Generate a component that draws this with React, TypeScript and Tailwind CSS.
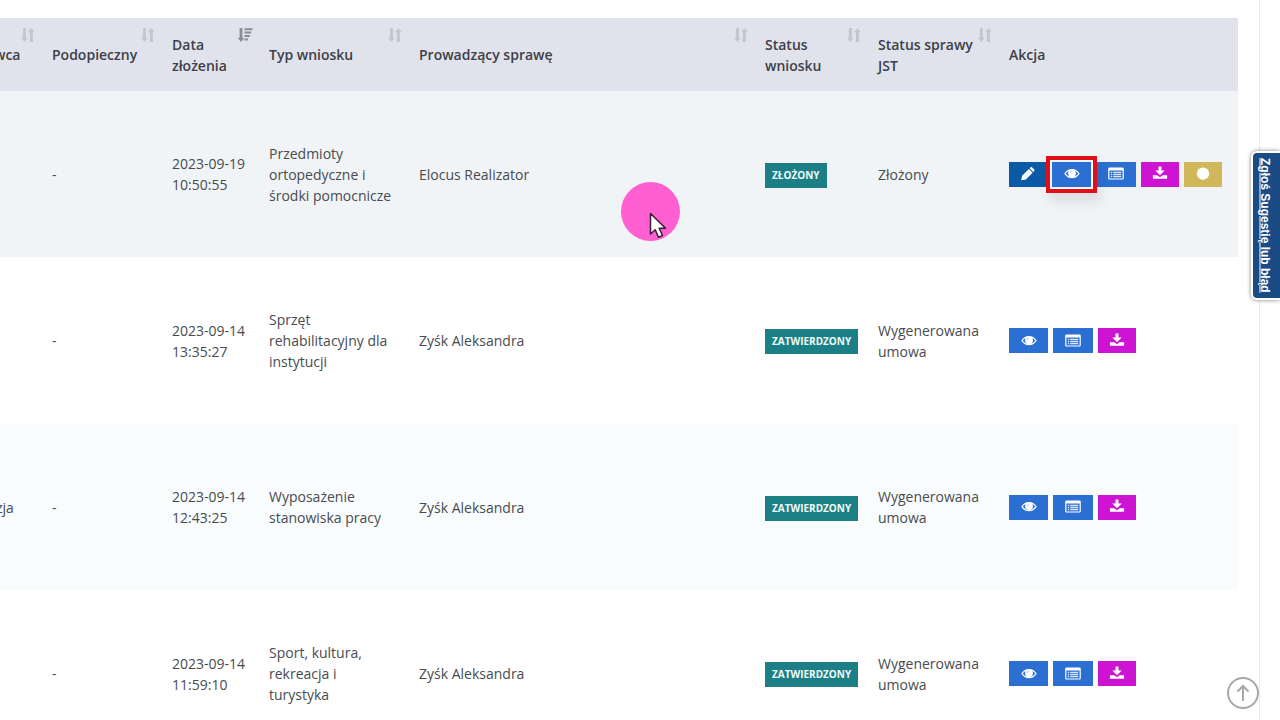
import type { ReactNode } from "react";

const ICON = "block h-4 w-4";

function PencilIcon() {
  return (
    <svg viewBox="0 0 16 16" className={ICON} fill="#fff" aria-hidden="true">
      <path d="M1.200 14.200l.9-4.400 6.800-6.800 3.700 3.700-6.800 6.800zM9.600 2.300l.9-.9c.5-.5 1.200-.5 1.700 0l1.900 1.900c.5.5.5 1.200 0 1.700l-.9.9z" />
      <path d="M4.600 11l5-5" stroke="#b5cde6" strokeWidth=".6" fill="none" />
    </svg>
  );
}

function EyeIcon() {
  return (
    <svg viewBox="0 0 16 16" className={ICON} aria-hidden="true">
      <path d="M1 7.700c1.700-2.600 4.200-4 7-4s5.300 1.400 7 4c-1.700 2.600-4.200 4-7 4s-5.300-1.400-7-4z" fill="none" stroke="#fff" strokeWidth="1.200" strokeLinejoin="round" />
      <circle cx="8" cy="7.200" r="3.900" fill="#fff" />
      <path d="M6.200 6.600c.1-.9.700-1.500 1.600-1.600" fill="none" stroke="#8fb4ea" strokeWidth=".8" strokeLinecap="round" />
    </svg>
  );
}

function ListIcon() {
  return (
    <svg viewBox="0 0 16 16" className={ICON} aria-hidden="true">
      <rect x=".8" y="2" width="14.400" height="11" rx=".8" fill="none" stroke="#fff" strokeWidth="1.200" />
      <path d="M1 2h14v2.500H1z" fill="#fff" />
      <path d="M2.800 6.300h1.400M2.800 8.500h1.400M2.800 10.700h1.400M5.200 6.300h8M5.200 8.500h8M5.200 10.700h8" stroke="#dce8f9" strokeWidth="1.300" />
    </svg>
  );
}

function DownloadIcon() {
  return (
    <svg viewBox="0 0 16 16" className={ICON} fill="#fff" aria-hidden="true">
      <path d="M6.500 .5h3v4h3.200L8 9.200 3.300 4.500h3.200z" />
      <path d="M.9 9.200h4.300L8 11.200l2.800-2h4.300v3.600H.9z" />
    </svg>
  );
}

function DotIcon() {
  return (
    <svg viewBox="0 0 16 16" className={ICON} aria-hidden="true">
      <circle cx="8" cy="7.700" r="6.200" fill="#fff" />
    </svg>
  );
}

function SortIcon({ active }: { active?: boolean }) {
  if (active) {
    return (
      <svg viewBox="0 0 16 16" className={ICON} fill="#8b8e98" aria-hidden="true">
        <path d="M2.600 1h2.800v10h1.900L4 15 .7 11h1.900z" />
        <path d="M7.500 1.200h8v2h-8zM7.500 4.600h6.700v2H7.500zM7.500 8h5.300v2H7.500zM7.500 11.400h3.500v2H7.500z" />
      </svg>
    );
  }
  return (
    <svg viewBox="0 0 16 16" className={ICON} fill="#c3c6ce" aria-hidden="true">
      <path d="M2.900 1h3v9.700h1.900L4.400 15 1 10.700h1.900z" />
      <path d="M9.900 15h3V5.300h1.900L11.400 1 8 5.300h1.900z" />
    </svg>
  );
}

type Kind = "edit" | "view" | "list" | "download" | "state";

const actions: Record<Kind, { label: string; icon: ReactNode; look: string }> = {
  edit: { label: "Edytuj", icon: <PencilIcon />, look: "w-[38px] bg-[#0a5aa5]" },
  view: { label: "Podgląd", icon: <EyeIcon />, look: "w-[39px] bg-[#2b6fd2]" },
  list: { label: "Szczegóły", icon: <ListIcon />, look: "w-10 bg-[#2b6fd2]" },
  download: { label: "Pobierz", icon: <DownloadIcon />, look: "w-[38px] bg-[#cc14d2]" },
  state: { label: "Stan", icon: <DotIcon />, look: "w-[38px] bg-[#d0b75c]" },
};

function ActionButton({ kind, marked }: { kind: Kind; marked?: boolean }) {
  const { label, icon, look } = actions[kind];
  const button = (
    <button type="button" aria-label={label} className={`${look} flex h-[25px] shrink-0 items-center justify-center`}>
      {icon}
    </button>
  );
  if (!marked) return button;
  return (
    <span className="relative">
      {button}
      <span className="pointer-events-none absolute -inset-x-1.5 -inset-y-1.5 border-4 border-[#e30f16] shadow-[4px_10px_10px_rgba(0,0,0,0.08)]">
        <span className="block h-full border border-white" />
      </span>
    </span>
  );
}

interface Row {
  owner: string;
  date: string;
  time: string;
  type: string;
  lead: string;
  status: string;
  jst: string;
  kinds: Kind[];
  tone: string;
}

const rows: Row[] = [
  { owner: "", date: "2023-09-19", time: "10:50:55", type: "Przedmioty ortopedyczne i środki pomocnicze", lead: "Elocus Realizator", status: "ZŁOŻONY", jst: "Złożony", kinds: ["edit", "view", "list", "download", "state"], tone: "bg-[#f0f4f6]" },
  { owner: "", date: "2023-09-14", time: "13:35:27", type: "Sprzęt rehabilitacyjny dla instytucji", lead: "Zyśk Aleksandra", status: "ZATWIERDZONY", jst: "Wygenerowana umowa", kinds: ["view", "list", "download"], tone: "bg-white" },
  { owner: "zja", date: "2023-09-14", time: "12:43:25", type: "Wyposażenie stanowiska pracy", lead: "Zyśk Aleksandra", status: "ZATWIERDZONY", jst: "Wygenerowana umowa", kinds: ["view", "list", "download"], tone: "bg-[#f8fcfd]" },
  { owner: "", date: "2023-09-14", time: "11:59:10", type: "Sport, kultura, rekreacja i turystyka", lead: "Zyśk Aleksandra", status: "ZATWIERDZONY", jst: "Wygenerowana umowa", kinds: ["view", "list", "download"], tone: "bg-white" },
];

const columns = [
  { title: "wca", width: "w-[42px]", inner: "-ml-1.5", sort: "both" },
  { title: "Podopieczny", width: "w-[120px]", inner: "px-2.5", sort: "both" },
  { title: "Data złożenia", width: "w-[97px]", inner: "px-2.5", sort: "desc" },
  { title: "Typ wniosku", width: "w-[150px]", inner: "px-2.5", sort: "both" },
  { title: "Prowadzący sprawę", width: "", inner: "px-2.5", sort: "both" },
  { title: "Status wniosku", width: "w-[113px]", inner: "px-2.5", sort: "both" },
  { title: "Status sprawy JST", width: "w-[131px]", inner: "pl-2.5 pr-5", sort: "both" },
  { title: "Akcja", width: "w-[239px]", inner: "px-2.5", sort: "none" },
];

export default function App() {
  return (
    <main className="h-screen overflow-hidden bg-white pr-5 font-['Open_Sans','Noto_Sans',sans-serif] text-sm leading-[21px] text-[#484b50]">
      <div className="h-full overflow-hidden border-r border-[#e9eaee] pt-[18px] pr-[21px]">
        <table className="w-full table-fixed border-collapse text-left">
          <thead>
            <tr className="h-[73px] bg-[#e0e3ec] text-[#3d4047]">
              {columns.map((c) => (
                <th key={c.title} scope="col" className={`${c.width} relative p-0 font-semibold`}>
                  <div className={c.inner}>{c.title}</div>
                  {c.sort !== "none" && (
                    <span className="absolute top-[9px] right-1.5">
                      <SortIcon active={c.sort === "desc"} />
                    </span>
                  )}
                </th>
              ))}
            </tr>
          </thead>
          <tbody>
            {rows.map((r) => (
              <tr key={r.time} className={`${r.tone} h-[166px] even:h-[167px]`}>
                <td className="p-0">
                  <div className="-ml-1">{r.owner}</div>
                </td>
                <td className="px-2.5">-</td>
                <td className="px-2.5">
                  <span className="block whitespace-nowrap">{r.date}</span>
                  <span className="block">{r.time}</span>
                </td>
                <td className="pr-3.5 pl-2.5">{r.type}</td>
                <td className="px-2.5">{r.lead}</td>
                <td className="pl-2.5">
                  <span className="mt-0.5 flex h-[25px] w-fit items-center bg-[#1d7f86] px-[7px] text-[10px] font-bold text-[#f0fbfb]">{r.status}</span>
                </td>
                <td className="px-2.5">{r.jst}</td>
                <td className="pl-2.5">
                  <div className="flex gap-[5px]">
                    {r.kinds.map((k) => (
                      <ActionButton key={k} kind={k} marked={k === "view" && r.kinds.length > 3} />
                    ))}
                  </div>
                </td>
              </tr>
            ))}
          </tbody>
        </table>
      </div>

      <div className="pointer-events-none absolute top-[182px] left-[621px] h-[59px] w-[59px] rounded-full bg-[#ff5fd0]">
        <svg viewBox="0 0 18 28" className="absolute top-[30px] left-7 h-7 w-[18px]" aria-hidden="true">
          <path d="M1.500 1.500v20.500l4.700-4.300 3.300 7.600 4-1.800-3.300-7.300h6.300z" fill="#fff" stroke="#3a1b3c" strokeWidth="1.500" strokeLinejoin="round" />
        </svg>
      </div>

      <a
        href="#zglos"
        className="absolute top-[151px] right-0 flex h-[149px] w-[29px] items-center justify-center rounded-l-md border-2 border-r-0 border-white bg-[#1b4b85] pr-1 font-['Liberation_Sans',sans-serif] text-xs font-bold whitespace-nowrap text-white underline decoration-1 underline-offset-[-3px] shadow-[0_0_4px_rgba(0,0,0,0.5)] [writing-mode:vertical-rl]"
      >
        Zgłoś Sugestię lub błąd
      </a>

      <button type="button" aria-label="Do góry" className="absolute right-[21px] bottom-[11px]">
        <svg viewBox="0 0 32 32" className="block h-8 w-8" fill="none" stroke="#a3a8ad" strokeWidth="2" aria-hidden="true">
          <circle cx="16" cy="16" r="15" />
          <path d="M16 24V9.500M10.500 14.500L16 9l5.500 5.500" />
        </svg>
      </button>
    </main>
  );
}
